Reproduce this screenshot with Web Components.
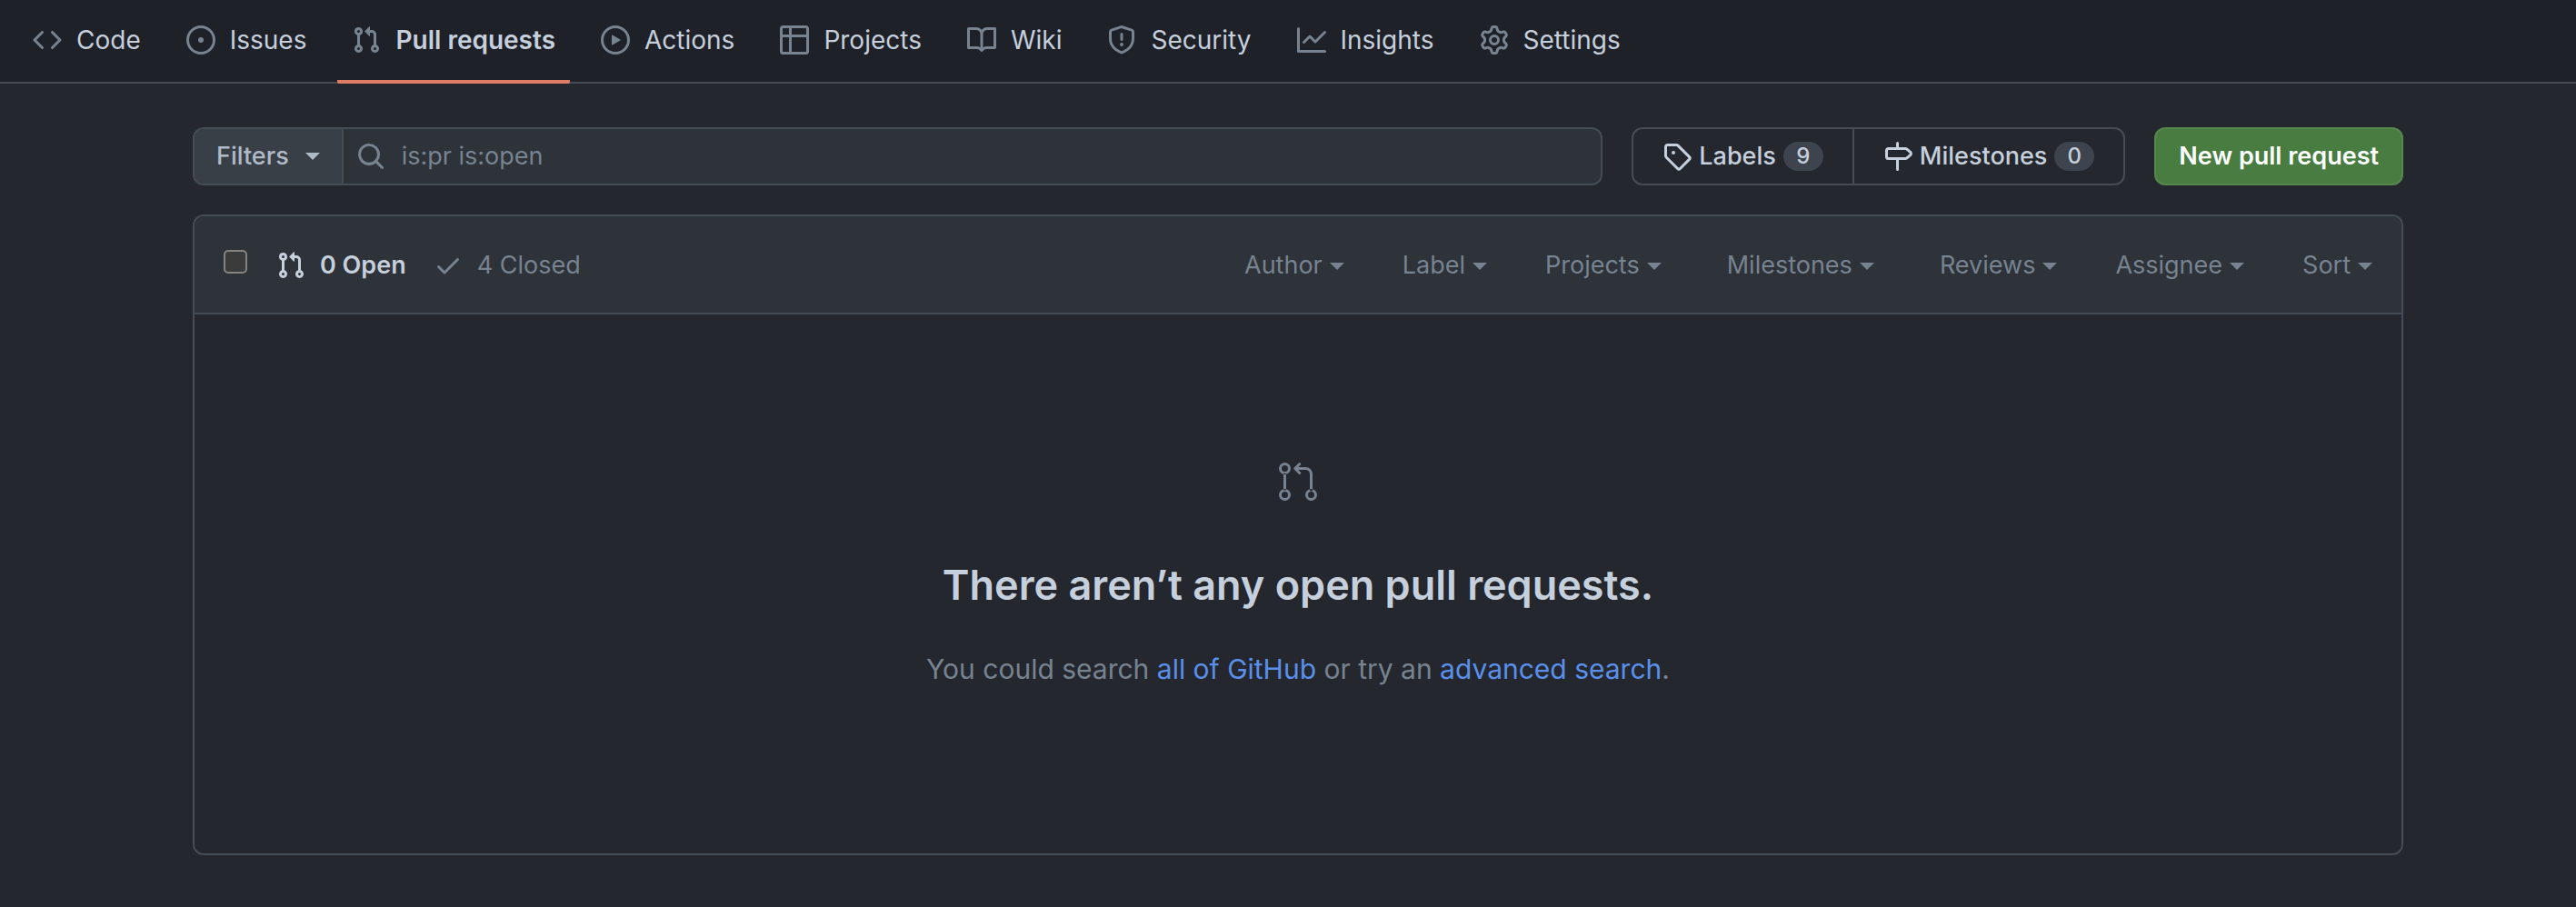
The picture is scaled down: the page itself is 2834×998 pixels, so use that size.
<!DOCTYPE html>
<html lang="en">
<head>
<meta charset="utf-8">
<title>Pull requests</title>
<style>
  :root {
    --page: #24272e;
    --inset: #1e2128;
    --subtle: #2e3239;
    --border: #464c55;
    --text: #c6cfdc;
    --muted: #778390;
    --link: #5a90ea;
  }
  body {
    margin: 0;
    min-height: 100vh;
    background: var(--page);
    color: var(--text);
    font: 400 27px/40px Inter, "Liberation Sans", sans-serif;
  }
</style>
</head>
<body>
<pulls-page></pulls-page>
<script>
const ICONS = {
  code: 'M4.72 3.22a.75.75 0 0 1 1.06 1.06L2.06 8l3.72 3.72a.75.75 0 1 1-1.06 1.06L.47 8.53a.75.75 0 0 1 0-1.06l4.25-4.25Zm6.56 0a.75.75 0 1 0-1.06 1.06L13.94 8l-3.72 3.72a.75.75 0 1 0 1.06 1.06l4.25-4.25a.75.75 0 0 0 0-1.06l-4.25-4.25Z',
  issue: 'M8 9.5a1.5 1.5 0 1 0 0-3 1.5 1.5 0 0 0 0 3ZM8 0a8 8 0 1 1 0 16A8 8 0 0 1 8 0ZM1.5 8a6.5 6.5 0 1 0 13 0 6.5 6.5 0 0 0-13 0Z',
  pull: 'M7.177 3.073L9.573.677A.25.25 0 0 1 10 .854v4.792a.25.25 0 0 1-.427.177L7.177 3.427a.25.25 0 0 1 0-.354zM3.75 2.5a.75.75 0 1 0 0 1.5.75.75 0 0 0 0-1.5zm-2.25.75a2.25 2.25 0 1 1 3 2.122v5.256a2.251 2.251 0 1 1-1.5 0V5.372A2.25 2.25 0 0 1 1.5 3.25zM11 2.5h-1V4h1a1 1 0 0 1 1 1v5.628a2.251 2.251 0 1 0 1.5 0V5A2.5 2.5 0 0 0 11 2.5zm1 10.25a.75.75 0 1 1 1.5 0 .75.75 0 0 1-1.5 0zM3.75 12a.75.75 0 1 0 0 1.5.75.75 0 0 0 0-1.5z',
  play: 'M8 0a8 8 0 1 1 0 16A8 8 0 0 1 8 0ZM1.5 8a6.5 6.5 0 1 0 13 0 6.5 6.5 0 0 0-13 0Zm4.879-2.773 4.264 2.559a.25.25 0 0 1 0 .428l-4.264 2.559A.25.25 0 0 1 6 10.559V5.442a.25.25 0 0 1 .379-.215Z',
  table: 'M0 1.75C0 .784.784 0 1.75 0h12.5C15.216 0 16 .784 16 1.75v12.5A1.75 1.75 0 0 1 14.25 16H1.75A1.75 1.75 0 0 1 0 14.25ZM6.5 6.5v8h7.75a.25.25 0 0 0 .25-.25V6.5Zm8-1.5V1.75a.25.25 0 0 0-.25-.25H6.5V5Zm-13 1.5v7.75c0 .138.112.25.25.25H5v-8ZM5 5V1.5H1.75a.25.25 0 0 0-.25.25V5Z',
  book: 'M0 1.75A.75.75 0 0 1 .75 1h4.253c1.227 0 2.317.59 3 1.501A3.743 3.743 0 0 1 11.006 1h4.245a.75.75 0 0 1 .75.75v10.5a.75.75 0 0 1-.75.75h-4.507a2.25 2.25 0 0 0-1.591.659l-.622.621a.75.75 0 0 1-1.06 0l-.622-.621A2.25 2.25 0 0 0 5.258 13H.75a.75.75 0 0 1-.75-.75Zm7.251 10.324.004-5.073-.002-2.253A2.25 2.25 0 0 0 5.003 2.5H1.5v9h3.757a3.75 3.75 0 0 1 1.994.574ZM8.755 4.75l-.004 7.322a3.752 3.752 0 0 1 1.992-.572H14.5v-9h-3.495a2.25 2.25 0 0 0-2.25 2.25Z',
  shield: 'M7.467.133a1.748 1.748 0 0 1 1.066 0l5.25 1.68A1.75 1.75 0 0 1 15 3.48V7c0 1.566-.32 3.182-1.303 4.682-.983 1.498-2.585 2.813-5.032 3.855a1.697 1.697 0 0 1-1.33 0c-2.447-1.042-4.049-2.357-5.032-3.855C1.32 10.182 1 8.566 1 7V3.48a1.75 1.75 0 0 1 1.217-1.667Zm.61 1.429a.25.25 0 0 0-.153 0l-5.25 1.68a.25.25 0 0 0-.174.238V7c0 1.358.275 2.666 1.057 3.86.784 1.194 2.121 2.34 4.366 3.297a.196.196 0 0 0 .154 0c2.245-.956 3.582-2.104 4.366-3.298C13.225 9.666 13.5 8.36 13.5 7V3.48a.251.251 0 0 0-.174-.237l-5.25-1.68ZM8.75 4.75v3a.75.75 0 0 1-1.5 0v-3a.75.75 0 0 1 1.5 0ZM9 10.5a1 1 0 1 1-2 0 1 1 0 0 1 2 0Z',
  graph: 'M1.5 1.75V13.5h13.75a.75.75 0 0 1 0 1.5H.75a.75.75 0 0 1-.75-.75V1.75a.75.75 0 0 1 1.5 0Zm14.28 2.53-5.25 5.25a.75.75 0 0 1-1.06 0L7 7.06 4.28 9.78a.751.751 0 0 1-1.042-.018.751.751 0 0 1-.018-1.042l3.25-3.25a.75.75 0 0 1 1.06 0L10 7.94l4.72-4.72a.751.751 0 0 1 1.042.018.751.751 0 0 1 .018 1.042Z',
  gear: 'M8 0a8.2 8.2 0 0 1 .701.031C9.444.095 9.99.645 10.16 1.29l.288 1.107c.018.066.079.158.212.224.231.114.454.243.668.386.123.082.233.09.299.071l1.103-.303c.644-.176 1.392.021 1.82.63.27.385.506.792.704 1.218.315.675.111 1.422-.364 1.891l-.814.806c-.049.048-.098.147-.088.294.016.257.016.515 0 .772-.01.147.038.246.088.294l.814.806c.475.469.679 1.216.364 1.891a7.977 7.977 0 0 1-.704 1.217c-.428.61-1.176.807-1.82.63l-1.102-.302c-.067-.019-.177-.011-.3.071a5.909 5.909 0 0 1-.668.386c-.133.066-.194.158-.211.224l-.29 1.106c-.168.646-.715 1.196-1.458 1.26a8.006 8.006 0 0 1-1.402 0c-.743-.064-1.289-.614-1.458-1.26l-.289-1.106c-.018-.066-.079-.158-.212-.224a5.738 5.738 0 0 1-.668-.386c-.123-.082-.233-.09-.299-.071l-1.103.303c-.644.176-1.392-.021-1.82-.63a8.12 8.12 0 0 1-.704-1.218c-.315-.675-.111-1.422.363-1.891l.815-.806c.05-.048.098-.147.088-.294a6.214 6.214 0 0 1 0-.772c.01-.147-.038-.246-.088-.294l-.815-.806C.635 6.045.431 5.298.746 4.623a7.92 7.92 0 0 1 .704-1.217c.428-.61 1.176-.807 1.82-.63l1.102.302c.067.019.177.011.3-.071.214-.143.437-.272.668-.386.133-.066.194-.158.211-.224l.29-1.106C6.009.645 6.556.095 7.299.03 7.53.01 7.764 0 8 0Zm-.571 1.525c-.036.003-.108.036-.137.146l-.289 1.105c-.147.561-.549.967-.998 1.189-.173.086-.34.183-.5.29-.417.278-.97.423-1.529.27l-1.103-.303c-.109-.03-.175.016-.195.045-.22.312-.412.644-.573.99-.014.031-.021.11.059.19l.815.806c.411.406.562.957.53 1.456a4.709 4.709 0 0 0 0 .582c.032.499-.119 1.05-.53 1.456l-.815.806c-.081.08-.073.159-.059.19.162.346.353.677.573.989.02.03.085.076.195.046l1.102-.303c.56-.153 1.113-.008 1.53.27.161.107.328.204.501.29.447.222.85.629.997 1.189l.289 1.105c.029.109.101.143.137.146a6.6 6.6 0 0 0 1.142 0c.036-.003.108-.036.137-.146l.289-1.105c.147-.561.549-.967.998-1.189.173-.086.34-.183.5-.29.417-.278.97-.423 1.529-.27l1.103.303c.109.029.175-.016.195-.045.22-.313.411-.644.573-.99.014-.031.021-.11-.059-.19l-.815-.806c-.411-.406-.562-.957-.53-1.456a4.709 4.709 0 0 0 0-.582c-.032-.499.119-1.05.53-1.456l.815-.806c.081-.08.073-.159.059-.19a6.464 6.464 0 0 0-.573-.989c-.02-.03-.085-.076-.195-.046l-1.102.303c-.56.153-1.113.008-1.53-.27a4.44 4.44 0 0 0-.501-.29c-.447-.222-.85-.629-.997-1.189l-.289-1.105c-.029-.11-.101-.143-.137-.146a6.6 6.6 0 0 0-1.142 0ZM11 8a3 3 0 1 1-6 0 3 3 0 0 1 6 0ZM9.5 8a1.5 1.5 0 1 0-3.001.001A1.5 1.5 0 0 0 9.5 8Z',
  search: 'M10.68 11.74a6 6 0 0 1-7.922-8.982 6 6 0 0 1 8.982 7.922l3.04 3.04a.749.749 0 0 1-.326 1.275.749.749 0 0 1-.734-.215ZM11.5 7a4.499 4.499 0 1 0-8.997 0A4.499 4.499 0 0 0 11.5 7Z',
  tag: 'M1 7.775V2.75C1 1.784 1.784 1 2.75 1h5.025c.464 0 .91.184 1.238.513l6.25 6.25a1.75 1.75 0 0 1 0 2.474l-5.026 5.026a1.75 1.75 0 0 1-2.474 0l-6.25-6.25A1.752 1.752 0 0 1 1 7.775Zm1.5 0c0 .066.026.13.073.177l6.25 6.25a.25.25 0 0 0 .354 0l5.025-5.025a.25.25 0 0 0 0-.354l-6.25-6.25a.25.25 0 0 0-.177-.073H2.75a.25.25 0 0 0-.25.25ZM6 5a1 1 0 1 1 0 2 1 1 0 0 1 0-2Z',
  milestone: 'M7.75 0a.75.75 0 0 1 .75.75V3h3.634c.414 0 .814.147 1.13.414l2.07 1.75a1.75 1.75 0 0 1 0 2.672l-2.07 1.75a1.75 1.75 0 0 1-1.13.414H8.5v5.25a.75.75 0 0 1-1.5 0V10H2.75A1.75 1.75 0 0 1 1 8.25v-3.5C1 3.784 1.784 3 2.75 3H7V.75A.75.75 0 0 1 7.75 0Zm4.384 8.5a.25.25 0 0 0 .161-.06l2.07-1.75a.248.248 0 0 0 0-.38l-2.07-1.75a.25.25 0 0 0-.161-.06H2.75a.25.25 0 0 0-.25.25v3.5c0 .138.112.25.25.25h9.384Z',
  check: 'M13.78 4.22a.75.75 0 0 1 0 1.06l-7.25 7.25a.75.75 0 0 1-1.06 0L2.22 9.28a.751.751 0 0 1 .018-1.042.751.751 0 0 1 1.042-.018L6 10.94l6.72-6.72a.75.75 0 0 1 1.06 0Z',
  pullLarge: 'M16 19.25a3.25 3.25 0 1 1 6.5 0 3.25 3.25 0 0 1-6.5 0Zm-14.5 0a3.25 3.25 0 1 1 6.5 0 3.25 3.25 0 0 1-6.5 0Zm0-14.5a3.25 3.25 0 1 1 6.5 0 3.25 3.25 0 0 1-6.5 0ZM4.75 3a1.75 1.75 0 1 0 .001 3.501A1.75 1.75 0 0 0 4.75 3Zm0 14.5a1.75 1.75 0 1 0 .001 3.501A1.75 1.75 0 0 0 4.75 17.5Zm14.5 0a1.75 1.75 0 1 0 .001 3.501 1.75 1.75 0 0 0-.001-3.501ZM13.405 1.72a.75.75 0 0 1 0 1.06L12.185 4h4.065A3.75 3.75 0 0 1 20 7.75v8.75a.75.75 0 0 1-1.5 0V7.75a2.25 2.25 0 0 0-2.25-2.25h-4.064l1.22 1.22a.75.75 0 0 1-1.061 1.06l-2.5-2.5a.75.75 0 0 1 0-1.06l2.5-2.5a.75.75 0 0 1 1.06 0ZM4.75 7.25A.75.75 0 0 1 5.5 8v8A.75.75 0 0 1 4 16V8a.75.75 0 0 1 .75-.75Z'
};

function define(name, render) {
  customElements.define(name, class extends HTMLElement {
    constructor() {
      super();
      this.attachShadow({ mode: 'open' });
    }
    connectedCallback() {
      this.shadowRoot.innerHTML = render(this);
    }
  });
}

define('oct-icon', el => {
  const large = el.getAttribute('name') === 'pullLarge';
  const size = large ? 48 : 32;
  const box = large ? 24 : 16;
  return `
  <style>
    :host { display: block; flex: none; width: ${size}px; height: ${size}px; }
    svg { display: block; fill: currentColor; }
  </style>
  <svg width="${size}" height="${size}" viewBox="0 0 ${box} ${box}" fill-rule="evenodd" aria-hidden="true"><path d="${ICONS[el.getAttribute('name')]}"/></svg>`;
});

define('drop-caret', () => `
  <style>
    :host { display: block; flex: none; border: 8px solid transparent; border-top-color: currentColor; border-bottom: 0; }
  </style>`);

define('nav-tab', el => `
  <style>
    :host { display: block; }
    a {
      display: flex; align-items: center; gap: 16px; height: 88px; padding: 0 16px;
      border-bottom: 4px solid transparent; color: var(--text); text-decoration: none; white-space: nowrap; font-size: 28px;
    }
    oct-icon { color: var(--muted); }
    a[aria-current] { border-color: #de7d63; border-radius: 2px; font-weight: 600; }
  </style>
  <a href="#"${el.hasAttribute('current') ? ' aria-current="page"' : ''}><oct-icon name="${el.getAttribute('icon')}"></oct-icon><span><slot></slot></span></a>`);

define('repo-nav', () => `
  <style>
    :host { display: block; background: var(--inset); box-shadow: inset 0 -2px var(--border); }
    nav { display: flex; gap: 18px; padding: 0 20px; }
  </style>
  <nav aria-label="Repository">
    <nav-tab icon="code">Code</nav-tab>
    <nav-tab icon="issue">Issues</nav-tab>
    <nav-tab icon="pull" current>Pull requests</nav-tab>
    <nav-tab icon="play">Actions</nav-tab>
    <nav-tab icon="table">Projects</nav-tab>
    <nav-tab icon="book">Wiki</nav-tab>
    <nav-tab icon="shield">Security</nav-tab>
    <nav-tab icon="graph">Insights</nav-tab>
    <nav-tab icon="gear">Settings</nav-tab>
  </nav>`);

define('search-bar', () => `
  <style>
    :host { display: block; flex: 1; min-width: 0; }
    form { display: flex; box-sizing: border-box; height: 64px; border: 2px solid var(--border); border-radius: 12px; overflow: hidden; background: var(--subtle); }
    button {
      display: flex; align-items: center; gap: 18px; padding: 0 24px; border: 0; border-right: 2px solid var(--border);
      background: #383f47; color: #b0bac7; font: inherit; font-weight: 500;
    }
    label { display: flex; flex: 1; align-items: center; gap: 18px; padding-left: 14px; color: var(--muted); }
    input { flex: 1; min-width: 0; padding: 0; border: 0; outline: 0; background: none; color: inherit; font: inherit; }
  </style>
  <form role="search">
    <button type="button" aria-haspopup="menu">Filters <drop-caret></drop-caret></button>
    <label><oct-icon name="search"></oct-icon><input type="text" aria-label="Search all issues" value="is:pr is:open"></label>
  </form>`);

define('count-link', el => `
  <style>
    :host { display: block; }
    a { display: flex; align-items: center; gap: 8px; height: 60px; padding: 0 32px; color: var(--text); text-decoration: none; font-weight: 500; }
    .count { min-width: 44px; border-radius: 16px; background: #3e444d; font-size: 24px; line-height: 32px; text-align: center; }
  </style>
  <a href="#"><oct-icon name="${el.getAttribute('icon')}"></oct-icon><slot></slot><span class="count">${el.getAttribute('count')}</span></a>`);

define('page-toolbar', () => `
  <style>
    :host { display: flex; gap: 32px; }
    .links { display: flex; border: 2px solid var(--border); border-radius: 12px; }
    .links count-link + count-link { border-left: 2px solid var(--border); }
    .new { box-sizing: border-box; height: 64px; padding: 0 25px; border: 2px solid #55874f; border-radius: 12px; background: #487c41; color: #fff; font: inherit; font-weight: 600; }
  </style>
  <search-bar></search-bar>
  <nav class="links" aria-label="Issue">
    <count-link icon="tag" count="9">Labels</count-link>
    <count-link icon="milestone" count="0">Milestones</count-link>
  </nav>
  <button class="new" type="button">New pull request</button>`);

define('filter-menu', () => `
  <style>
    :host { display: block; }
    button { display: flex; align-items: center; gap: 8px; padding: 0; border: 0; background: none; color: var(--muted); font: inherit; }
    drop-caret { margin-top: 2px; }
  </style>
  <button type="button" aria-haspopup="menu"><slot></slot><drop-caret></drop-caret></button>`);

define('list-header', () => `
  <style>
    :host { display: flex; align-items: center; box-sizing: border-box; height: 108px; padding: 2px 32px 0; background: var(--subtle); border-bottom: 2px solid var(--border); }
    input { appearance: none; flex: none; box-sizing: border-box; width: 26px; height: 26px; margin: 0 32px 8px 0; border: 2px solid #85827f; border-radius: 5px; background: #3b3b3b; }
    .states, .menus, a { display: flex; align-items: center; }
    .states { gap: 30px; }
    a { gap: 16px; color: var(--muted); text-decoration: none; }
    a[aria-current] { color: var(--text); font-weight: 600; }
    .menus { gap: 64px; margin-left: auto; }
    .wide { margin-left: 8px; }
  </style>
  <input type="checkbox" aria-label="Select all pull requests">
  <div class="states">
    <a href="#" aria-current="page"><oct-icon name="pull"></oct-icon>0 Open</a>
    <a href="#"><oct-icon name="check"></oct-icon>4 Closed</a>
  </div>
  <div class="menus">
    <filter-menu>Author</filter-menu>
    <filter-menu>Label</filter-menu>
    <filter-menu>Projects</filter-menu>
    <filter-menu class="wide">Milestones</filter-menu>
    <filter-menu class="wide">Reviews</filter-menu>
    <filter-menu>Assignee</filter-menu>
    <filter-menu>Sort</filter-menu>
  </div>`);

define('blank-slate', () => `
  <style>
    :host { display: flex; flex-direction: column; align-items: center; padding: 160px 64px 179px; text-align: center; }
    oct-icon { color: var(--muted); }
    h2 { margin: 54px 0 0; font-size: 45px; line-height: 72px; font-weight: 600; }
    p { margin: 32px 0 0; font-size: 30px; line-height: 48px; color: var(--muted); }
    a { color: var(--link); text-decoration: none; }
  </style>
  <oct-icon name="pullLarge"></oct-icon>
  <h2>There aren’t any open pull requests.</h2>
  <p>You could search <a href="#">all of GitHub</a> or try an <a href="#">advanced search</a>.</p>`);

define('pulls-page', () => `
  <style>
    :host { display: block; }
    main { padding: 48px 190px 48px 212px; }
    section { margin-top: 32px; border: 2px solid var(--border); border-radius: 12px; overflow: hidden; }
  </style>
  <repo-nav></repo-nav>
  <main>
    <page-toolbar></page-toolbar>
    <section aria-label="Pull requests">
      <list-header></list-header>
      <blank-slate></blank-slate>
    </section>
  </main>`);
</script>
</body>
</html>
